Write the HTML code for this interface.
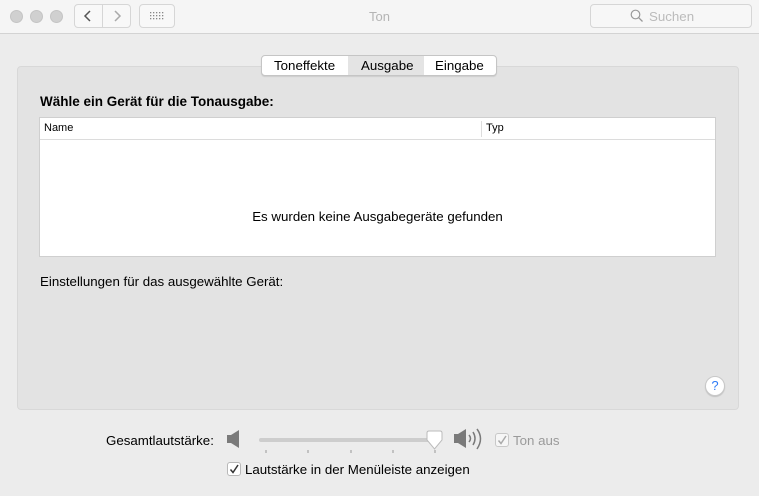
<!DOCTYPE html>
<html><head><style>
*{box-sizing:border-box;margin:0;padding:0}
body{width:759px;height:496px;background:#ececec;font-family:"Liberation Sans",sans-serif;font-size:13.3px;color:#000;position:relative;overflow:hidden}
.abs{position:absolute}
.tb{left:0;top:0;width:759px;height:34px;background:#f5f5f5;border-bottom:1px solid #d3d3d3}
.dot{width:13px;height:13px;border-radius:50%;background:#d0d0d0;border:1px solid #c4c4c4;top:10px}
.btn{border:1px solid #d6d6d6;border-radius:4px;background:#f8f8f8}
</style></head><body>
<div class="abs tb"></div>
<div class="abs dot" style="left:10px"></div>
<div class="abs dot" style="left:30px"></div>
<div class="abs dot" style="left:50px"></div>
<div class="abs btn" style="left:74px;top:4px;width:57px;height:24px"></div>
<div class="abs" style="left:102px;top:4px;width:1px;height:24px;background:#d6d6d6"></div>
<svg class="abs" style="left:74px;top:4px" width="57" height="24"><path d="M16 7 L11 12 L16 17" stroke="#555" stroke-width="1.5" fill="none"/><path d="M41 7 L46 12 L41 17" stroke="#aaa" stroke-width="1.5" fill="none"/></svg>
<div class="abs btn" style="left:139px;top:4px;width:36px;height:24px"></div>
<svg class="abs" style="left:149px;top:11px" width="16" height="10"><g fill="#888"><rect x="1" y="1" width="1.3" height="1.3"/><rect x="4" y="1" width="1.3" height="1.3"/><rect x="7" y="1" width="1.3" height="1.3"/><rect x="10" y="1" width="1.3" height="1.3"/><rect x="13" y="1" width="1.3" height="1.3"/><rect x="1" y="4" width="1.3" height="1.3"/><rect x="4" y="4" width="1.3" height="1.3"/><rect x="7" y="4" width="1.3" height="1.3"/><rect x="10" y="4" width="1.3" height="1.3"/><rect x="13" y="4" width="1.3" height="1.3"/><rect x="1" y="7" width="1.3" height="1.3"/><rect x="4" y="7" width="1.3" height="1.3"/><rect x="7" y="7" width="1.3" height="1.3"/><rect x="10" y="7" width="1.3" height="1.3"/><rect x="13" y="7" width="1.3" height="1.3"/></g></svg>
<div class="abs" style="left:0;width:759px;top:9px;text-align:center;color:#b4b4b4;font-size:13px">Ton</div>
<div class="abs btn" style="left:590px;top:4px;width:162px;height:24px;background:#f7f7f7"></div>
<svg class="abs" style="left:630px;top:9px" width="14" height="14"><circle cx="5.5" cy="5.5" r="4.3" stroke="#999" stroke-width="1.2" fill="none"/><path d="M8.6 8.6 L12.5 12.5" stroke="#999" stroke-width="1.3"/></svg>
<div class="abs" style="left:649px;top:9px;color:#bbb">Suchen</div>

<div class="abs" style="left:17px;top:66px;width:722px;height:344px;background:#e3e3e3;border:1px solid #d8d8d8;border-radius:4px"></div>
<div class="abs" style="left:261px;top:55px;width:236px;height:21px;background:#fff;border:1px solid #c5c5c5;border-radius:4px;box-shadow:0 1px 1px rgba(0,0,0,.1);overflow:hidden">
<div class="abs" style="left:86px;top:0;width:76px;height:20px;background:#e4e4e4"></div>
<div class="abs" style="left:12px;top:2px">Toneffekte</div>
<div class="abs" style="left:99px;top:2px">Ausgabe</div>
<div class="abs" style="left:173px;top:2px">Eingabe</div>
</div>
<div class="abs" style="left:40px;top:94px;font-weight:bold;font-size:13.5px">Wähle ein Gerät für die Tonausgabe:</div>
<div class="abs" style="left:39px;top:117px;width:677px;height:140px;background:#fff;border:1px solid #cfcfcf">
<div class="abs" style="left:0;top:0;width:675px;height:22px;border-bottom:1px solid #dcdcdc"></div>
<div class="abs" style="left:441px;top:3px;width:1px;height:16px;background:#ddd"></div>
<div class="abs" style="left:4px;top:4px;font-size:11px">Name</div>
<div class="abs" style="left:446px;top:4px;font-size:11px">Typ</div>
<div class="abs" style="left:0;width:675px;top:91px;text-align:center">Es wurden keine Ausgabegeräte gefunden</div>
</div>
<div class="abs" style="left:40px;top:274px">Einstellungen für das ausgewählte Gerät:</div>
<div class="abs" style="left:705px;top:376px;width:20px;height:20px;border-radius:50%;background:#fff;border:1px solid #c8c8c8;box-shadow:0 1px 1px rgba(0,0,0,.15);color:#2f7cf6;text-align:center;font-size:13px;line-height:18px">?</div>

<div class="abs" style="left:106px;top:433px">Gesamtlautstärke:</div>
<svg class="abs" style="left:226px;top:429px" width="16" height="20"><path d="M1 6 H5 L13 1 V19 L5 14 H1 Z" fill="#7a7a7a"/></svg>
<div class="abs" style="left:259px;top:438px;width:180px;height:4px;background:#cdcdcd;border-radius:2px"></div>
<svg class="abs" style="left:259px;top:448px" width="180" height="6"><g stroke="#999"><path d="M7 2V5M49 2V5M92 2V5M134 2V5M176 2V5"/></g></svg>
<svg class="abs" style="left:425px;top:430px" width="20" height="22"><path d="M2 3 Q2 1 4 1 H15 Q17 1 17 3 V10 L9.5 19 L2 10 Z" fill="#fff" stroke="#bbb"/></svg>
<svg class="abs" style="left:453px;top:427px" width="34" height="26"><path d="M1 7 H5 L13 2 V21 L5 16 H1 Z" fill="#7a7a7a"/><path d="M16 8 Q19 11.5 16 15M20 5 Q24 11.5 20 18M24 2 Q31 11.5 24 22" stroke="#7a7a7a" stroke-width="1.5" fill="none"/></svg>
<div class="abs" style="left:495px;top:433px;width:14px;height:14px;border:1px solid #c8c8c8;border-radius:3px;background:#f6f6f6"></div>
<svg class="abs" style="left:495px;top:433px" width="14" height="14"><path d="M3.5 7.5 L6 10.5 L11 3" stroke="#aaa" stroke-width="1.5" fill="none"/></svg>
<div class="abs" style="left:513px;top:433px;color:#9a9a9a">Ton aus</div>
<div class="abs" style="left:227px;top:462px;width:14px;height:14px;border:1px solid #b8b8b8;border-radius:3px;background:#fff"></div>
<svg class="abs" style="left:227px;top:462px" width="14" height="14"><path d="M3.5 7.5 L6 10.5 L11 3" stroke="#333" stroke-width="1.5" fill="none"/></svg>
<div class="abs" style="left:245px;top:462px">Lautstärke in der Menüleiste anzeigen</div>
</body></html>
